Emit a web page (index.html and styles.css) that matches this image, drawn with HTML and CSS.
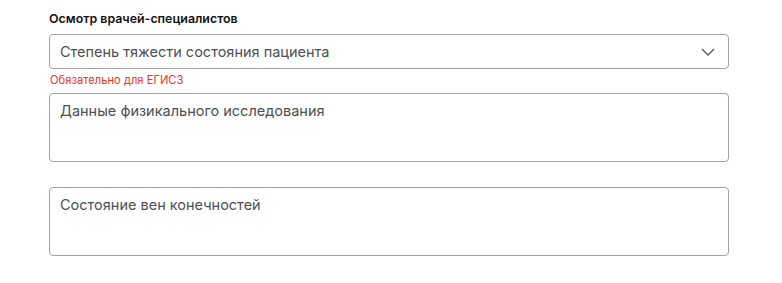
FILE: index.html
```html
<!DOCTYPE html>
<html lang="ru">
<head>
    <meta charset="UTF-8">
    <title>Осмотр врачей-специалистов</title>
    <link rel="stylesheet" href="styles.css">
</head>
<body>
    <div class="section">
        <h3 class="section-title">Осмотр врачей-специалистов</h3>
        <div class="field field-select">
            <div class="select">
                <span>Степень тяжести состояния пациента</span>
                <svg class="chevron" width="14" height="8" viewBox="0 0 14 8">
                    <path d="M1 1l6 6 6-6" fill="none" stroke="#555" stroke-width="1.3"/>
                </svg>
            </div>
            <div class="hint">Обязательно для ЕГИСЗ</div>
        </div>
        <div class="field">
            <textarea class="area" placeholder="Данные физикального исследования"></textarea>
        </div>
        <div class="field">
            <textarea class="area" placeholder="Состояние вен конечностей"></textarea>
        </div>
    </div>
</body>
</html>
```

FILE: styles.css
```css
body {
    margin: 0;
    font-family: Inter, "Noto Sans", sans-serif;
    background: #fff;
}
.section {
    width: 680px;
    padding: 11px 0 0 49px;
}
.section-title {
    margin: 0 0 8px;
    font-size: 12.4px;
    font-weight: 600;
    color: #111;
    line-height: 15px;
}
.field {
    margin-bottom: 25px;
}
.field-select {
    margin-bottom: 6px;
}
.select {
    box-sizing: border-box;
    height: 35px;
    border: 1px solid #a3a3a3;
    border-radius: 4px;
    display: flex;
    align-items: center;
    justify-content: space-between;
    padding: 0 13px 0 10px;
    font-size: 14.5px;
    color: #4b4f57;
}
.hint {
    margin-top: 4px;
    font-size: 11.2px;
    color: #f5331f;
    line-height: 14px;
    padding-left: 1px;
}
.area {
    display: block;
    box-sizing: border-box;
    width: 100%;
    height: 69px;
    border: 1px solid #a3a3a3;
    border-radius: 4px;
    padding: 8px 10px;
    font-family: inherit;
    font-size: 14.5px;
    resize: none;
    outline: none;
}
.area::placeholder {
    color: #4b4f57;
}
```
